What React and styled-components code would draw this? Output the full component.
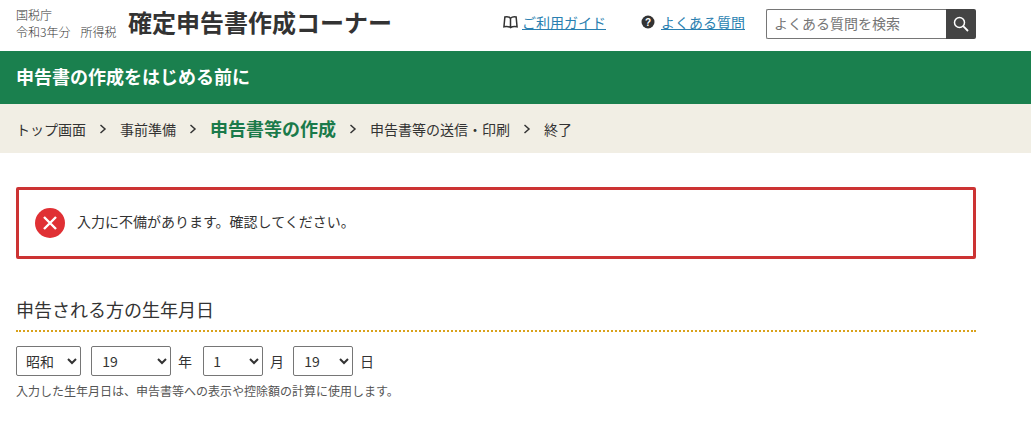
import React from "react";
import styled, { createGlobalStyle } from "styled-components";

const GlobalStyle = createGlobalStyle`
  html, body { margin: 0; padding: 0; background: #fff; }
  body {
    font-family: "Noto Sans CJK JP", "Liberation Sans", sans-serif;
    color: #333;
  }
`;

const Header = styled.header`
  height: 51px;
  width: 960px;
  margin-left: 16px;
  display: flex;
  align-items: center;
`;
const Agency = styled.div`
  width: 112px;
  font-size: 12px;
  line-height: 17px;
  margin-top: -6px;
  font-weight: 300;
  white-space: nowrap;
  span { margin-left: 10px; }
`;
const Title = styled.div`
  font-size: 24px;
  font-weight: 700;
  line-height: 30px;
  margin-top: -7px;
  white-space: nowrap;
`;
const HeadLink = styled.div`
  display: flex;
  align-items: center;
  gap: ${(p) => p.$gap}px;
  font-size: 14px;
  margin-left: ${(p) => p.$left}px;
  margin-top: -7px;
  white-space: nowrap;
  a {
    color: #2a7fb0;
    text-decoration: underline;
  }
`;
const Search = styled.div`
  display: flex;
  margin-left: 21px;
  margin-top: -3px;
`;
const SearchInput = styled.input`
  box-sizing: border-box;
  width: 180px;
  height: 30px;
  border: 1px solid #767676;
  border-right: 0;
  border-radius: 2px 0 0 2px;
  padding: 0 7px 2px;
  font: 14px "Noto Sans CJK JP", sans-serif;
  outline: none;
  &::placeholder { color: #757575; opacity: 1; }
`;
const SearchButton = styled.button`
  width: 30px;
  height: 30px;
  border: 0;
  padding: 0;
  background: #444;
  border-radius: 0 2px 2px 0;
  display: flex;
  align-items: center;
  justify-content: center;
`;
const Band = styled.div`
  box-sizing: border-box;
  height: 53px;
  background: #1a804e;
  color: #fff;
  font-size: 18px;
  font-weight: 700;
  display: flex;
  align-items: center;
  padding: 0 0 3px 16px;
`;
const Steps = styled.nav`
  height: 49px;
  background: #f1eee4;
  display: flex;
  align-items: center;
  padding-left: 16px;
  font-size: 14px;
`;
const Step = styled.span`
  white-space: nowrap;
  ${(p) => p.$current && `
    color: #1a7a4a;
    font-size: 18px;
    font-weight: 700;
    margin-top: -2px;
  `}
`;
const Sep = styled.svg`
  width: 8px;
  height: 10px;
  margin: 0 13px 0 13px;
  flex: none;
`;
const Main = styled.main`
  width: 960px;
  margin-left: 16px;
  padding-top: 34px;
`;
const Alert = styled.div`
  box-sizing: border-box;
  height: 72px;
  border: 3px solid #cc3333;
  border-radius: 2px;
  display: flex;
  align-items: center;
  gap: 12px;
  padding-left: 16px;
  font-size: 14px;
  span { margin-top: -5px; }
`;
const Heading = styled.h2`
  margin: 37px 0 0;
  height: 34px;
  box-sizing: content-box;
  font-size: 18px;
  font-weight: 400;
  line-height: 26px;
  border-bottom: 2px dotted #d9a21b;
`;
const DateRow = styled.div`
  display: flex;
  align-items: center;
  margin-top: 14px;
  font-size: 14px;
`;
const Select = styled.select`
  box-sizing: border-box;
  width: ${(p) => p.$w}px;
  height: 30px;
  margin-right: ${(p) => p.$gap}px;
  background: #fff;
  color: #333;
  border: 1px solid #767676;
  border-radius: 2px;
  padding: 0 4px 0 ${(p) => p.$pad}px;
  font: 14px "Noto Sans CJK JP", "Liberation Sans", sans-serif;
`;
const Unit = styled.span`
  margin-right: ${(p) => p.$gap}px;
`;
const Help = styled.p`
  margin: 6px 0 0;
  font-size: 12px;
  line-height: 18px;
  color: #555;
`;

const Chevron = () => (
  <Sep viewBox="0 0 8 10">
    <path d="M1.5 1 L6 5 L1.5 9" fill="none" stroke="#333" strokeWidth="1.5" />
  </Sep>
);

export default function App() {
  return (
    <>
      <GlobalStyle />
      <Header>
        <Agency>
          国税庁
          <br />
          令和3年分<span>所得税</span>
        </Agency>
        <Title>確定申告書作成コーナー</Title>
        <HeadLink $left={111} $gap={4}>
          <svg width="15" height="14" viewBox="0 0 16 14">
            <path
              d="M8 3 C6.5 1.5 4 1.2 2 1.6 L1 12 C3.5 11.4 6 11.6 8 13 C10 11.6 12.5 11.4 15 12 L14 1.6 C12 1.2 9.5 1.5 8 3 Z M8 3 V13"
              fill="none"
              stroke="#333"
              strokeWidth="1.6"
            />
          </svg>
          <a href="#guide">ご利用ガイド</a>
        </HeadLink>
        <HeadLink $left={35} $gap={6}>
          <svg width="14" height="14" viewBox="0 0 14 14">
            <circle cx="7" cy="7" r="6.5" fill="#333" />
            <text x="7" y="10.5" textAnchor="middle" fontSize="10" fontWeight="700" fill="#fff" fontFamily="Liberation Sans">?</text>
          </svg>
          <a href="#faq">よくある質問</a>
        </HeadLink>
        <Search>
          <SearchInput placeholder="よくある質問を検索" />
          <SearchButton aria-label="検索">
            <svg width="16" height="16" viewBox="0 0 16 16">
              <circle cx="6.5" cy="6.5" r="5" fill="none" stroke="#fff" strokeWidth="1.5" />
              <path d="M10.2 10.2 L15 15" stroke="#fff" strokeWidth="1.8" />
            </svg>
          </SearchButton>
        </Search>
      </Header>
      <Band>申告書の作成をはじめる前に</Band>
      <Steps>
        <Step>トップ画面</Step>
        <Chevron />
        <Step>事前準備</Step>
        <Chevron />
        <Step $current>申告書等の作成</Step>
        <Chevron />
        <Step>申告書等の送信・印刷</Step>
        <Chevron />
        <Step>終了</Step>
      </Steps>
      <Main>
        <Alert>
          <svg width="30" height="30" viewBox="0 0 30 30">
            <circle cx="15" cy="15" r="15" fill="#e03034" />
            <path d="M9 9 L21 21 M21 9 L9 21" stroke="#fff" strokeWidth="2.4" />
          </svg>
          <span>入力に不備があります。確認してください。</span>
        </Alert>
        <Heading>申告される方の生年月日</Heading>
        <DateRow>
          <Select $w={65} $gap={10} $pad={5} defaultValue="昭和">
            <option>昭和</option>
          </Select>
          <Select $w={80} $gap={7} $pad={3}>
            <option>&nbsp;19</option>
          </Select>
          <Unit $gap={11}>年</Unit>
          <Select $w={60} $gap={7} $pad={2}>
            <option>&nbsp;1</option>
          </Select>
          <Unit $gap={9}>月</Unit>
          <Select $w={60} $gap={7} $pad={3}>
            <option>&nbsp;19</option>
          </Select>
          <Unit $gap={0}>日</Unit>
        </DateRow>
        <Help>入力した生年月日は、申告書等への表示や控除額の計算に使用します。</Help>
      </Main>
    </>
  );
}
